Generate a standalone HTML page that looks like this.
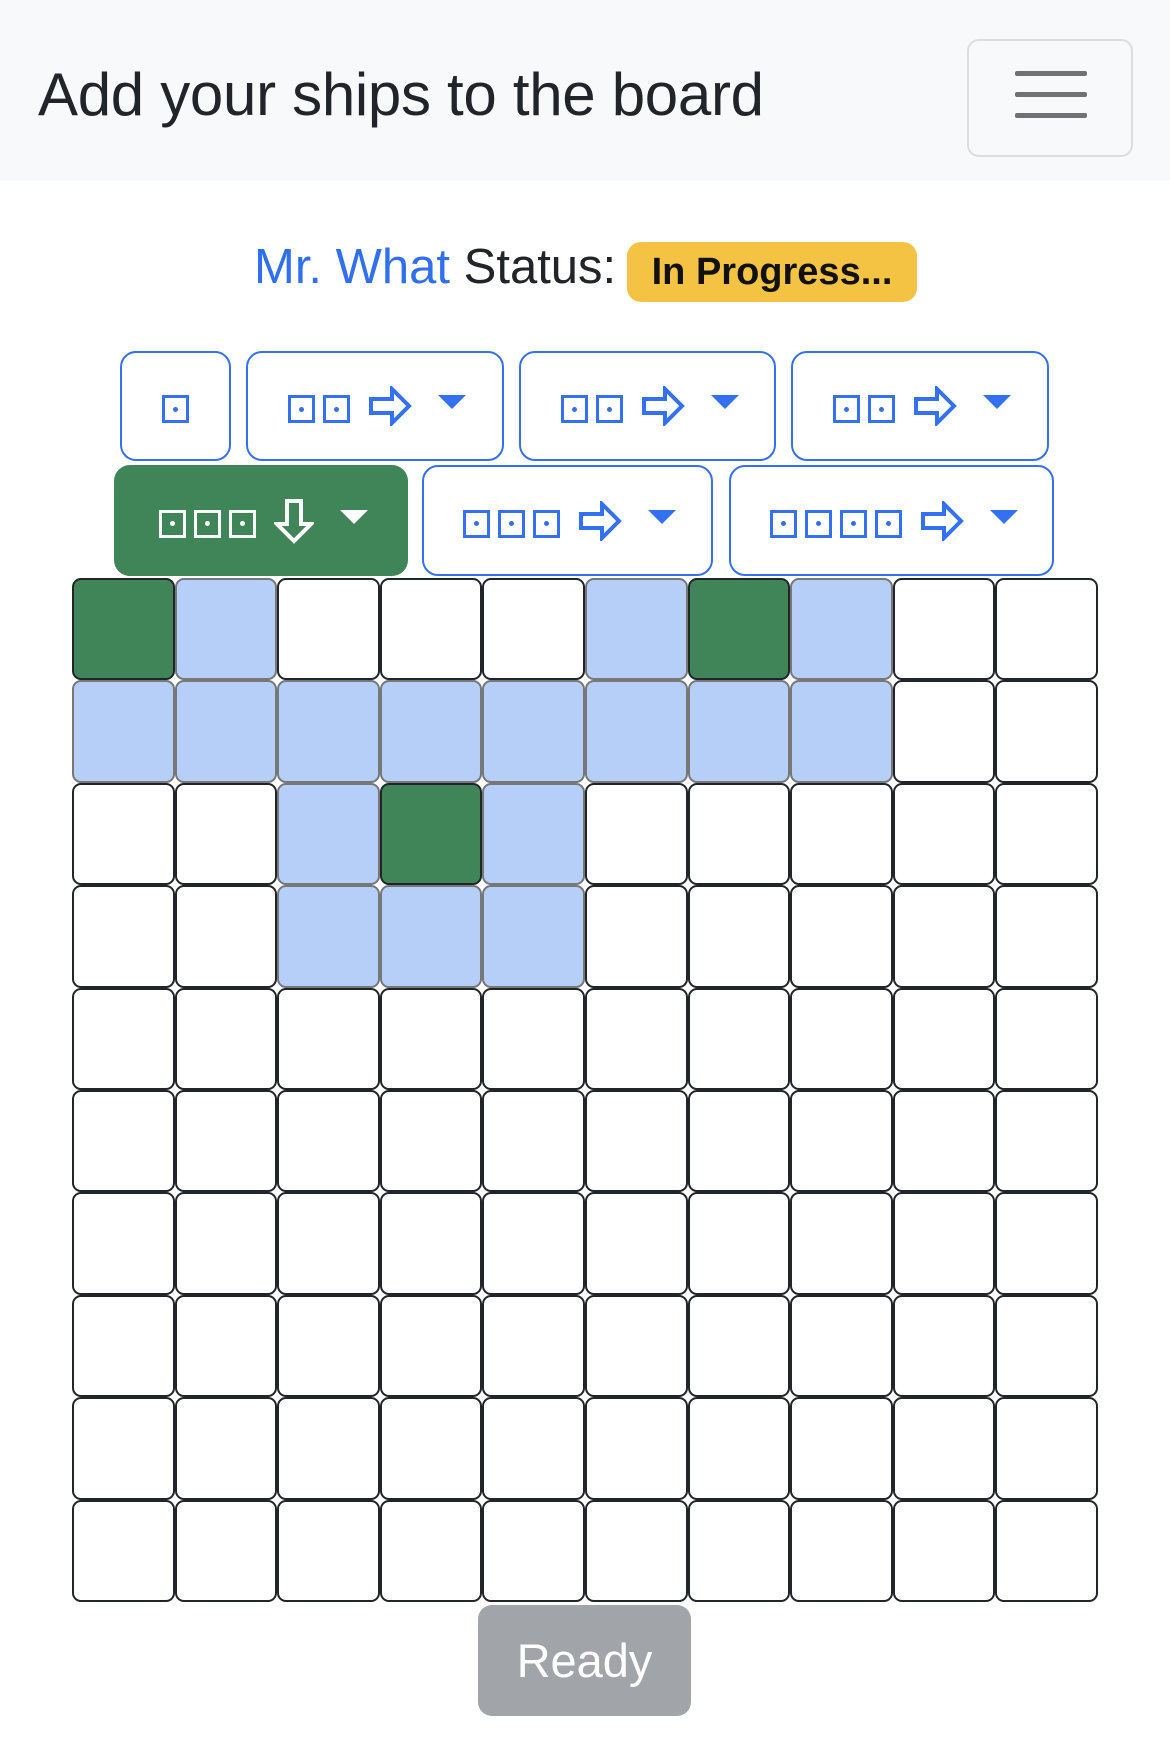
<!DOCTYPE html>
<html><head><meta charset="utf-8"><style>
*{box-sizing:border-box;margin:0;padding:0}
body{width:1170px;height:1748px;background:#fff;font-family:"Liberation Sans",sans-serif;position:relative;overflow:hidden}
.hdr{position:absolute;left:0;top:0;width:1170px;height:181px;background:#f8f9fa}
.title{position:absolute;left:38px;top:65px;font-size:60px;color:#212529;white-space:nowrap;line-height:1;letter-spacing:-0.3px}
.tog{position:absolute;left:967px;top:39px;width:166px;height:118px;border:2px solid #dcdde0;border-radius:12px}
.tog i{position:absolute;left:46px;width:72px;height:5px;background:#6f7174;border-radius:2px}
.status{position:absolute;left:254px;top:243px;font-size:49px;line-height:1;color:#212529;white-space:nowrap}
.status .n{color:#2f6ff0}
.badge{position:absolute;left:627px;top:242px;width:290px;height:60px;background:#f4c343;border-radius:14px;font-weight:bold;font-size:38px;line-height:60px;text-align:center;color:#111}
.btn{position:absolute;border:2.5px solid #3371f2;border-radius:16px;background:#fff;display:flex;align-items:center;justify-content:center;color:#3371f2}
.btn.g{background:#408558;border:none;color:#fff}
.sq{width:27px;height:28px;border:3px solid currentColor;position:relative;margin:0 4px;top:3px}
.sq:after{content:"";position:absolute;left:50%;top:50%;width:5px;height:5px;margin:-2.5px;border-radius:50%;background:currentColor}
.ar{margin-left:14px;margin-right:26px}
.ct{width:0;height:0;border-left:14px solid transparent;border-right:14px solid transparent;border-top:14px solid currentColor;margin-top:-8px}
.grid{position:absolute;left:72px;top:578px;width:1026px;display:grid;grid-template-columns:repeat(10,102.6px);grid-auto-rows:102.4px}
.c{border:2.5px solid #212529;border-radius:9px;background:#fff}
.c.b{background:#b6cff8;border-color:#777}
.c.gr{background:#408558;border-color:#212529}
.ready{position:absolute;left:478px;top:1605px;width:213px;height:111px;background:#a1a5a9;border-radius:14px;color:#fff;font-size:47px;text-align:center;line-height:111px}
</style></head><body>
<div class="hdr"></div>
<div class="title">Add your ships to the board</div>
<div class="tog"><i style="top:30px"></i><i style="top:51px"></i><i style="top:72px"></i></div>
<div class="status"><span class="n">Mr. What</span> Status:</div>
<div class="badge">In Progress...</div>

<div class="btn" style="left:120px;top:351px;width:111px;height:110px"><span class="sq"></span></div>
<div class="btn" style="left:246px;top:351px;width:258px;height:110px"><span class="sq"></span><span class="sq"></span><svg class="ar" width="44" height="40" viewBox="0 0 44 40"><path d="M3 13H24V3L41 20L24 37V27H3Z" fill="none" stroke="currentColor" stroke-width="4"/></svg><span class="ct"></span></div>
<div class="btn" style="left:519px;top:351px;width:257px;height:110px"><span class="sq"></span><span class="sq"></span><svg class="ar" width="44" height="40" viewBox="0 0 44 40"><path d="M3 13H24V3L41 20L24 37V27H3Z" fill="none" stroke="currentColor" stroke-width="4"/></svg><span class="ct"></span></div>
<div class="btn" style="left:791px;top:351px;width:258px;height:110px"><span class="sq"></span><span class="sq"></span><svg class="ar" width="44" height="40" viewBox="0 0 44 40"><path d="M3 13H24V3L41 20L24 37V27H3Z" fill="none" stroke="currentColor" stroke-width="4"/></svg><span class="ct"></span></div>

<div class="btn g" style="left:114px;top:465px;width:294px;height:111px"><span class="sq"></span><span class="sq"></span><span class="sq"></span><svg class="ar" width="40" height="46" viewBox="0 0 40 46"><path d="M13 3H27V26H37L20 43L3 26H13Z" fill="none" stroke="currentColor" stroke-width="4"/></svg><span class="ct"></span></div>
<div class="btn" style="left:422px;top:465px;width:291px;height:111px"><span class="sq"></span><span class="sq"></span><span class="sq"></span><svg class="ar" width="44" height="40" viewBox="0 0 44 40"><path d="M3 13H24V3L41 20L24 37V27H3Z" fill="none" stroke="currentColor" stroke-width="4"/></svg><span class="ct"></span></div>
<div class="btn" style="left:729px;top:465px;width:325px;height:111px"><span class="sq"></span><span class="sq"></span><span class="sq"></span><span class="sq"></span><svg class="ar" width="44" height="40" viewBox="0 0 44 40"><path d="M3 13H24V3L41 20L24 37V27H3Z" fill="none" stroke="currentColor" stroke-width="4"/></svg><span class="ct"></span></div>

<div class="grid">
<div class="c gr"></div><div class="c b"></div><div class="c"></div><div class="c"></div><div class="c"></div><div class="c b"></div><div class="c gr"></div><div class="c b"></div><div class="c"></div><div class="c"></div>
<div class="c b"></div><div class="c b"></div><div class="c b"></div><div class="c b"></div><div class="c b"></div><div class="c b"></div><div class="c b"></div><div class="c b"></div><div class="c"></div><div class="c"></div>
<div class="c"></div><div class="c"></div><div class="c b"></div><div class="c gr"></div><div class="c b"></div><div class="c"></div><div class="c"></div><div class="c"></div><div class="c"></div><div class="c"></div>
<div class="c"></div><div class="c"></div><div class="c b"></div><div class="c b"></div><div class="c b"></div><div class="c"></div><div class="c"></div><div class="c"></div><div class="c"></div><div class="c"></div>
<div class="c"></div><div class="c"></div><div class="c"></div><div class="c"></div><div class="c"></div><div class="c"></div><div class="c"></div><div class="c"></div><div class="c"></div><div class="c"></div>
<div class="c"></div><div class="c"></div><div class="c"></div><div class="c"></div><div class="c"></div><div class="c"></div><div class="c"></div><div class="c"></div><div class="c"></div><div class="c"></div>
<div class="c"></div><div class="c"></div><div class="c"></div><div class="c"></div><div class="c"></div><div class="c"></div><div class="c"></div><div class="c"></div><div class="c"></div><div class="c"></div>
<div class="c"></div><div class="c"></div><div class="c"></div><div class="c"></div><div class="c"></div><div class="c"></div><div class="c"></div><div class="c"></div><div class="c"></div><div class="c"></div>
<div class="c"></div><div class="c"></div><div class="c"></div><div class="c"></div><div class="c"></div><div class="c"></div><div class="c"></div><div class="c"></div><div class="c"></div><div class="c"></div>
<div class="c"></div><div class="c"></div><div class="c"></div><div class="c"></div><div class="c"></div><div class="c"></div><div class="c"></div><div class="c"></div><div class="c"></div><div class="c"></div>
</div>
<div class="ready">Ready</div>
</body></html>
